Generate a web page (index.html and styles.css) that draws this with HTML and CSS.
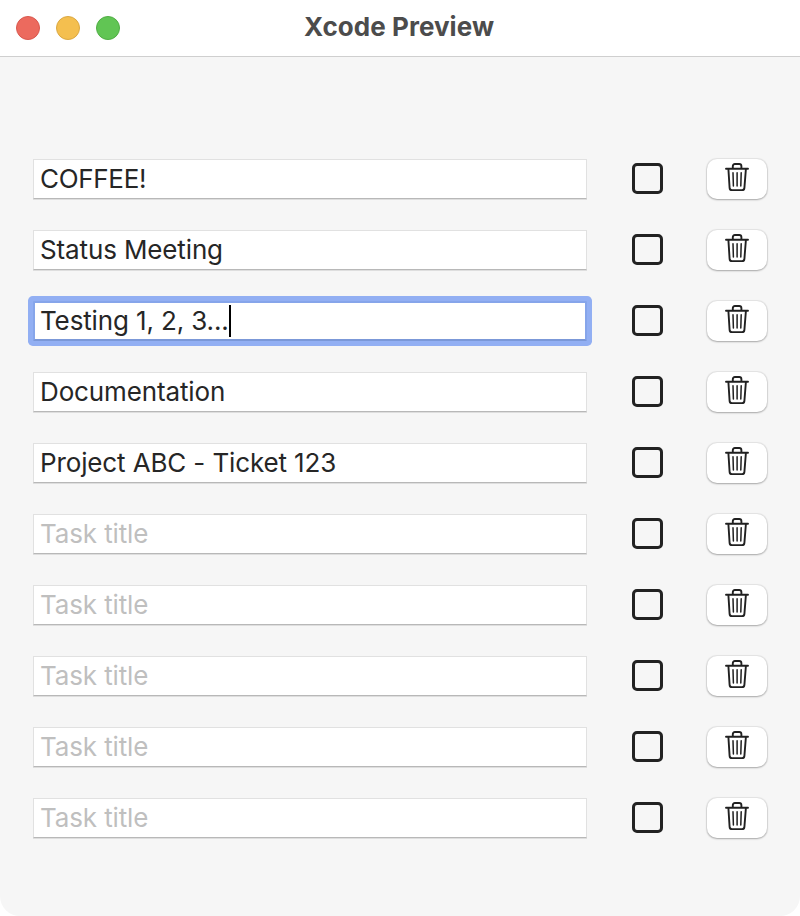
FILE: index.html
```html
<!DOCTYPE html>
<html lang="en">
<head>
<meta charset="utf-8">
<title>Xcode Preview</title>
<link rel="stylesheet" href="styles.css">
</head>
<body>
<svg class="defs" width="0" height="0" aria-hidden="true">
<symbol id="trash" viewBox="0 0 24 29">
<g fill="none" stroke="#202020" stroke-linecap="round" stroke-linejoin="round">
<path stroke-width="1.9" d="M1 5.7H23M7.8 5.4V3.2Q7.8 1 10 1H14.2Q16.4 1 16.4 3.2V5.4M3.4 6L4.6 24.8Q4.8 27.1 7 27.1H17Q19.2 27.1 19.4 24.8L20.9 6"/>
<path stroke-width="1.5" d="M8 9.8L8.4 23M12.1 9.8V23M16.2 9.8L15.8 23"/>
</g>
</symbol>
</svg>
<div class="window">
<header class="titlebar">
<div class="lights"><i class="light red"></i><i class="light yellow"></i><i class="light green"></i></div>
<h1 class="title">Xcode Preview</h1>
</header>
<main class="tasks">
<div class="row"><div class="field"><span class="caps">COFFEE!</span></div><div class="check"></div><button class="trash" aria-label="Delete"><svg><use href="#trash"/></svg></button></div>
<div class="row"><div class="field"><span>Status Meeting</span></div><div class="check"></div><button class="trash" aria-label="Delete"><svg><use href="#trash"/></svg></button></div>
<div class="row"><div class="field focused"><span>Testing 1, 2, 3...</span><i class="caret"></i></div><div class="check"></div><button class="trash" aria-label="Delete"><svg><use href="#trash"/></svg></button></div>
<div class="row"><div class="field"><span>Documentation</span></div><div class="check"></div><button class="trash" aria-label="Delete"><svg><use href="#trash"/></svg></button></div>
<div class="row"><div class="field"><span>Project ABC - Ticket 123</span></div><div class="check"></div><button class="trash" aria-label="Delete"><svg><use href="#trash"/></svg></button></div>
<div class="row"><div class="field"><span class="hint">Task title</span></div><div class="check"></div><button class="trash" aria-label="Delete"><svg><use href="#trash"/></svg></button></div>
<div class="row"><div class="field"><span class="hint">Task title</span></div><div class="check"></div><button class="trash" aria-label="Delete"><svg><use href="#trash"/></svg></button></div>
<div class="row"><div class="field"><span class="hint">Task title</span></div><div class="check"></div><button class="trash" aria-label="Delete"><svg><use href="#trash"/></svg></button></div>
<div class="row"><div class="field"><span class="hint">Task title</span></div><div class="check"></div><button class="trash" aria-label="Delete"><svg><use href="#trash"/></svg></button></div>
<div class="row"><div class="field"><span class="hint">Task title</span></div><div class="check"></div><button class="trash" aria-label="Delete"><svg><use href="#trash"/></svg></button></div>
</main>
</div>
</body>
</html>
```
FILE: styles.css
```css
* { box-sizing: border-box; }
body { margin: 0; background: #fff; font-family: Inter, "Liberation Sans", sans-serif; }
.defs { display: block; position: absolute; }
.window { height: 916px; background: #f6f6f6; border-radius: 0 0 20px 20px; overflow: hidden; }
.titlebar { height: 57px; background: #fff; border-bottom: 1px solid #cfcfcf; display: grid; grid-template-columns: 120px 1fr 120px; }
.lights { display: flex; gap: 16px; padding: 16px 0 0 16px; }
.light { flex: none; width: 24px; height: 24px; border-radius: 50%; border: 1px solid; }
.red { background: #ec6a5e; border-color: #d9584e; }
.yellow { background: #f4bf4f; border-color: #dba842; }
.green { background: #61c554; border-color: #50ae44; }
.title { margin: 0; padding-right: 2px; text-align: center; font-size: 26px; line-height: 54px; font-weight: 700; letter-spacing: 0.05px; color: #4c4c4c; white-space: nowrap; }
.tasks { padding: 101px 33px 0; display: flex; flex-direction: column; gap: 29px; }
.row { display: flex; align-items: center; height: 42px; }
.field { width: 554px; height: 40px; background: #fff; border: 1px solid #e1e1e1; border-bottom-color: #b8b8b8; box-shadow: 0 1px 0 #dedede; padding-left: 6px; display: flex; align-items: center; font-size: 26px; line-height: 38px; letter-spacing: -0.13px; color: #262626; white-space: nowrap; }
.field.focused { border: 2px solid #86a5ea; border-bottom-color: #7b98d8; box-shadow: 0 0 0 5px #92aff3; border-radius: 1.5px; padding-left: 5px; }
.caret { width: 2px; height: 32px; background: #000; }
.caps { letter-spacing: -0.3px; }
.hint { color: #bfbfbf; }
.check { margin: 0 0 2px 45px; width: 31px; height: 31px; border: 3px solid #222; border-radius: 5px; }
.trash { margin: 0 0 0 44px; padding: 4px 0 0; width: 60px; height: 40px; border: 0; border-radius: 10px; background: #fff; box-shadow: 0 0 1px 0.5px rgba(0,0,0,.07), 0 1px 2px rgba(0,0,0,.27); display: flex; justify-content: center; align-items: flex-start; }
.trash svg { width: 24px; height: 29px; display: block; }
```
